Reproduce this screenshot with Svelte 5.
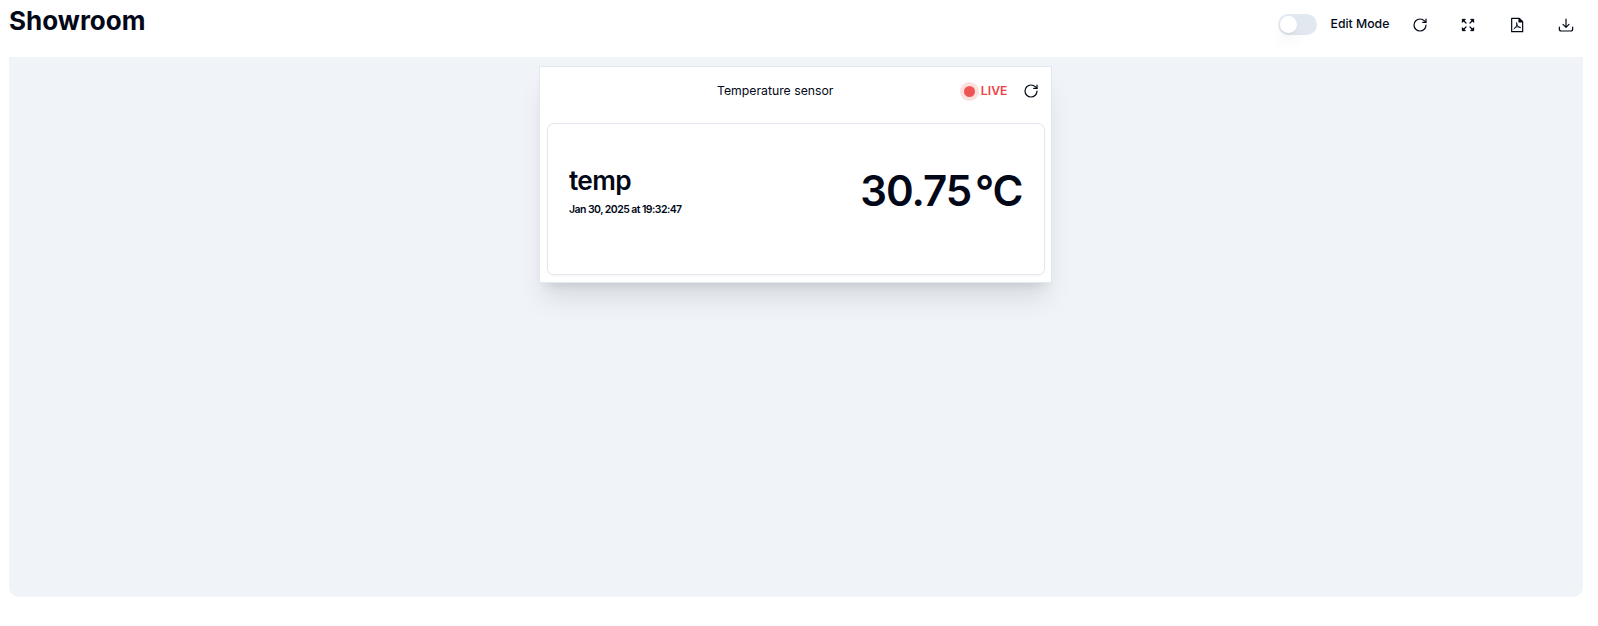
<script>
  const toolbar = ['reload', 'expand', 'pdf', 'download'];
  const labels = { reload: 'Reload', expand: 'Full screen', pdf: 'Export PDF', download: 'Download' };
  let editing = $state(false);
</script>

{#snippet icon(name)}
  {#if name === 'reload'}
    <svg class="icon" viewBox="0 0 24 24"><path d="M21 12a9 9 0 1 1-9-9c2.520 0 4.930 1 6.740 2.740L21 8" /><path d="M21 3v5h-5" /></svg>
  {:else if name === 'expand'}
    <svg class="icon shift" viewBox="0 0 24 24"><path d="m15 15 4.500 4.500M15 9l4.500-4.500M9 15l-4.500 4.500M9 9 4.500 4.500" /><path fill="currentColor" stroke-width="1.500" d="M16.500 3.500h4v4zM3.500 7.500v-4h4zM20.500 16.500v4h-4zM7.500 20.500h-4v-4z" /></svg>
  {:else if name === 'pdf'}
    <svg class="icon" viewBox="0 0 24 24"><path d="M4 2H15.500l5 5V22H4Z" /><path fill="currentColor" d="M15 2.500v5h5z" /><path stroke-width="1.300" d="M11.500 8.500c1 4-1 7.500-4 9.500M11.800 10c0 3 2 5.500 5 6M8.500 16c2-1.500 5-2 8.500-.500" /></svg>
  {:else}
    <svg class="icon" viewBox="0 0 24 24"><path d="M2 15v3a3 3 0 0 0 3 3h14a3 3 0 0 0 3-3v-3M12 3v12.500M7.500 11l4.500 4.500 4.500-4.500" /></svg>
  {/if}
{/snippet}

<main>
  <header>
    <h1>Showroom</h1>
    <div class="actions">
      <button class="switch" class:on={editing} role="switch" aria-checked={editing} aria-label="Edit Mode" onclick={() => (editing = !editing)}><span></span></button>
      <span class="mode">Edit Mode</span>
      {#each toolbar as name}
        <button class="tool" aria-label={labels[name]}>{@render icon(name)}</button>
      {/each}
    </div>
  </header>

  <section class="board">
    <article class="widget">
      <div class="head">
        <span class="title">Temperature sensor</span>
        <div class="status">
          <i class="dot"></i>
          <span class="live">LIVE</span>
          <button class="refresh" aria-label="Reload">{@render icon('reload')}</button>
        </div>
      </div>
      <div class="reading">
        <div>
          <h2>temp</h2>
          <p>Jan 30, 2025 at 19:32:47</p>
        </div>
        <div class="value"><span>30.75</span><span>°C</span></div>
      </div>
    </article>
  </section>
</main>

<style>
  :global(body) { background: #fff; }
  * { box-sizing: border-box; }
  main { font-family: Inter, sans-serif; color: #020817; padding: 0 15px 0 9px; height: 626px; }
  header { height: 57px; display: flex; justify-content: space-between; }
  h1 { margin: 5px 0 0; font-size: 26px; line-height: 32px; font-weight: 700; }
  button { border: 0; padding: 0; background: none; color: inherit; font: inherit; display: flex; cursor: pointer; }
  .actions { display: flex; align-items: center; height: 49px; }
  .switch { width: 39px; height: 21px; border-radius: 11px; background: #e2e8f0; padding: 2px; margin-right: 13.5px; }
  .switch span { width: 17px; height: 17px; border-radius: 50%; background: #fff; box-shadow: 0 10px 15px -3px #0000001a, 0 4px 6px -4px #0000001a; }
  .switch.on { background: #020817; }
  .switch.on span { transform: translateX(18px); }
  .mode { font-size: 12.25px; line-height: 18px; font-weight: 550; margin-bottom: 2px; width: 65.5px; white-space: nowrap; }
  .tool { width: 48.5px; height: 32px; align-items: center; justify-content: center; }
  .tool:last-child { margin-right: -7px; }
  .icon { width: 16px; height: 16px; fill: none; stroke: currentColor; stroke-width: 1.8; stroke-linecap: round; stroke-linejoin: round; display: block; }
  .icon.shift { margin-right: 1px; }
  .board { height: 540px; background: #f0f4f9; border-radius: 0 0 10px 10px; padding: 9px 0 0 530px; }
  .widget { width: 513px; height: 217px; background: #fff; border: 1px solid #e2e8f0; padding: 0 6px 6px 7px; box-shadow: 0 20px 25px -5px #0000001a, 0 8px 10px -6px #0000001a; }
  .head { height: 56px; display: flex; align-items: center; justify-content: space-between; padding: 0 6px 0 170px; }
  .title { font-size: 12.25px; line-height: 18px; margin-top: -8px; }
  .status { display: flex; align-items: center; margin-top: -8px; }
  .dot { width: 11px; height: 11px; border-radius: 50%; background: #ef5454; box-shadow: 0 0 0 4px #ef44442b; margin-top: 1px; }
  .live { color: #ef4444; font-size: 12.25px; line-height: 18px; font-weight: 600; margin: -1px 15.5px 0 6px; }
  .reading { height: 152px; border: 1px solid #e2e8f0; border-radius: 7px; box-shadow: 0 1px 2px #0000000d; padding: 0 21px; display: flex; justify-content: space-between; }
  h2 { margin: 41px 0 0; font-size: 26.25px; line-height: 32px; font-weight: 600; letter-spacing: -.65px; }
  p { margin: 5px 0 0; font-size: 10.5px; line-height: 16px; font-weight: 600; letter-spacing: -.56px; }
  .value { display: flex; gap: 4px; margin: 42px .5px 0 0; font-size: 42px; line-height: 50px; font-weight: 600; letter-spacing: -1.05px; }
</style>
